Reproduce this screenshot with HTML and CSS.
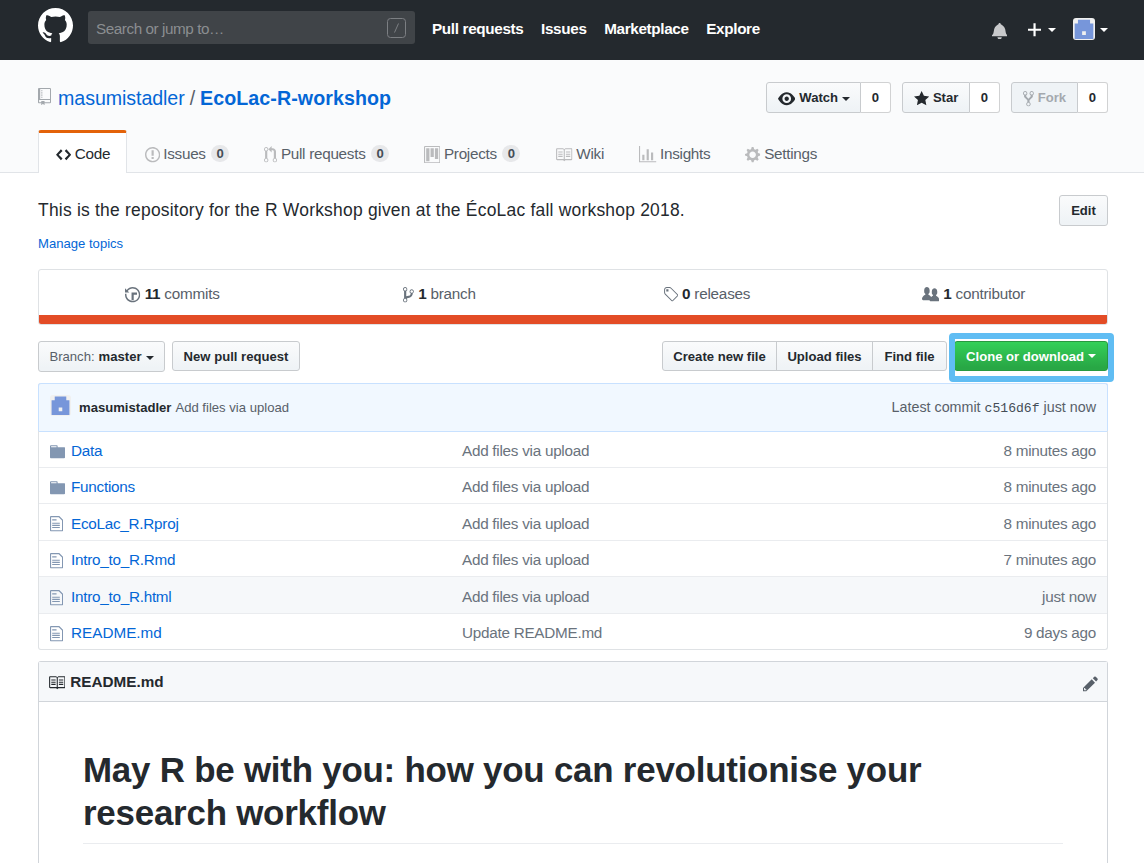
FILE: index.html
```html
<!DOCTYPE html>
<html lang="en">
<head>
<meta charset="utf-8">
<title>masumistadler/EcoLac-R-workshop</title>
<link rel="stylesheet" href="styles.css">
</head>
<body>
<svg class="sprite" aria-hidden="true">
  <symbol id="mark" viewBox="0 0 16 16"><path fill-rule="evenodd" d="M8 0C3.58 0 0 3.58 0 8c0 3.54 2.29 6.53 5.47 7.59.4.07.55-.17.55-.38 0-.19-.01-.82-.01-1.49-2.01.37-2.53-.49-2.69-.94-.09-.23-.48-.94-.82-1.13-.28-.15-.68-.52-.01-.53.63-.01 1.08.58 1.23.82.72 1.21 1.87.87 2.33.66.07-.52.28-.87.51-1.07-1.78-.2-3.64-.89-3.64-3.95 0-.87.31-1.59.82-2.15-.08-.2-.36-1.02.08-2.12 0 0 .67-.21 2.2.82.64-.18 1.32-.27 2-.27.68 0 1.36.09 2 .27 1.53-1.04 2.2-.82 2.2-.82.44 1.1.16 1.92.08 2.12.51.56.82 1.27.82 2.15 0 3.07-1.87 3.75-3.65 3.95.29.25.54.73.54 1.48 0 1.07-.01 1.93-.01 2.2 0 .21.15.46.55.38A8.013 8.013 0 0 0 16 8c0-4.42-3.58-8-8-8z"/></symbol>
  <symbol id="repo" viewBox="0 0 12 16"><path fill-rule="evenodd" d="M4 9H3V8h1v1zm0-3H3v1h1V6zm0-2H3v1h1V4zm0-2H3v1h1V2zm8-1v12c0 .55-.45 1-1 1H6v2l-1.5-1.5L3 16v-2H1c-.55 0-1-.45-1-1V1c0-.55.45-1 1-1h10c.55 0 1 .45 1 1zm-1 10H1v2h2v-1h3v1h5v-2zm0-10H2v9h9V1z"/></symbol>
  <symbol id="code" viewBox="0 0 14 16"><path fill-rule="evenodd" d="M9.500 3L8 4.500 11.500 8 8 11.500 9.500 13 14 8 9.500 3zm-5 0L0 8l4.500 5L6 11.500 2.500 8 6 4.500 4.500 3z"/></symbol>
  <symbol id="issue" viewBox="0 0 14 16"><path fill-rule="evenodd" d="M7 2.300c3.140 0 5.700 2.560 5.700 5.700s-2.560 5.700-5.700 5.700A5.710 5.710 0 0 1 1.300 8c0-3.140 2.560-5.700 5.700-5.700zM7 1C3.140 1 0 4.140 0 8s3.140 7 7 7 7-3.140 7-7-3.140-7-7-7zm1 3H6v5h2V4zm0 6H6v2h2v-2z"/></symbol>
  <symbol id="pr" viewBox="0 0 12 16"><path fill-rule="evenodd" d="M11 11.280V5c-.030-.780-.340-1.470-.940-2.060C9.460 2.350 8.780 2.030 8 2H7V0L4 3l3 3V4h1c.270.020.480.110.690.310.210.200.300.420.310.690v6.280A1.993 1.993 0 0 0 10 15a1.993 1.993 0 0 0 1-3.720zm-1 2.920c-.660 0-1.200-.550-1.200-1.200 0-.650.550-1.200 1.200-1.200.650 0 1.200.550 1.200 1.200 0 .650-.550 1.200-1.200 1.200zM4 3c0-1.110-.890-2-2-2a1.993 1.993 0 0 0-1 3.720v6.560A1.993 1.993 0 0 0 2 15a1.993 1.993 0 0 0 1-3.720V4.720c.590-.340 1-.980 1-1.720zm-.800 10c0 .660-.550 1.200-1.200 1.200-.650 0-1.200-.550-1.200-1.200 0-.650.550-1.200 1.200-1.200.650 0 1.200.550 1.200 1.200zM2 4.200C1.340 4.200.800 3.650.800 3c0-.650.550-1.200 1.200-1.200.650 0 1.200.550 1.200 1.200 0 .650-.550 1.200-1.200 1.200z"/></symbol>
  <symbol id="project" viewBox="0 0 15 16"><path fill-rule="evenodd" d="M10 12h3V2h-3v10zm-4-2h3V2H6v8zm-4 4h3V2H2v12zm-1 1h13V1H1v14zM14 0H1a1 1 0 0 0-1 1v14a1 1 0 0 0 1 1h13a1 1 0 0 0 1-1V1a1 1 0 0 0-1-1z"/></symbol>
  <symbol id="book" viewBox="0 0 16 16"><path fill-rule="evenodd" d="M3 5h4v1H3V5zm0 3h4V7H3v1zm0 2h4V9H3v1zm11-5h-4v1h4V5zm0 2h-4v1h4V7zm0 2h-4v1h4V9zm2-6v9c0 .55-.45 1-1 1H9.500l-1 1-1-1H2c-.55 0-1-.45-1-1V3c0-.55.45-1 1-1h5.500l1 1 1-1H15c.55 0 1 .45 1 1zm-8 .5L7.500 3H2v9h6V3.500zm7-.5H9.500l-.5.5V12h6V3z"/></symbol>
  <symbol id="graph" viewBox="0 0 16 16"><path fill-rule="evenodd" d="M16 14v1H0V0h1v14h15zM5 13H3V8h2v5zm4 0H7V3h2v10zm4 0h-2V6h2v7z"/></symbol>
  <symbol id="gear" viewBox="0 0 14 16"><path fill-rule="evenodd" d="M14 8.770v-1.600l-1.940-.640-.450-1.090.880-1.840-1.130-1.130-1.810.910-1.090-.450-.690-1.920h-1.600l-.630 1.940-1.110.450-1.840-.880-1.130 1.130.910 1.810-.450 1.090L0 7.230v1.590l1.940.640.450 1.090-.880 1.840 1.130 1.130 1.810-.910 1.090.450.690 1.920h1.590l.630-1.940 1.110-.450 1.840.880 1.130-1.130-.920-1.810.470-1.090L14 8.750v.020zM7 11c-1.660 0-3-1.340-3-3s1.340-3 3-3 3 1.340 3 3-1.340 3-3 3z"/></symbol>
  <symbol id="eye" viewBox="0 0 16 16"><path fill-rule="evenodd" d="M8.060 2C3 2 0 8 0 8s3 6 8.060 6C13 14 16 8 16 8s-3-6-7.940-6zM8 12c-2.200 0-4-1.780-4-4 0-2.200 1.800-4 4-4 2.220 0 4 1.800 4 4 0 2.220-1.780 4-4 4zm2-4c0 1.110-.890 2-2 2-1.110 0-2-.890-2-2 0-1.110.890-2 2-2 1.110 0 2 .890 2 2z"/></symbol>
  <symbol id="star" viewBox="0 0 14 16"><path fill-rule="evenodd" d="M14 6l-4.900-.640L7 1 4.900 5.360 0 6l3.600 3.260L2.670 14 7 11.670 11.330 14l-.930-4.740z"/></symbol>
  <symbol id="fork" viewBox="0 0 10 16"><path fill-rule="evenodd" d="M8 1a1.993 1.993 0 0 0-1 3.720V6L5 8 3 6V4.720A1.993 1.993 0 0 0 2 1a1.993 1.993 0 0 0-1 3.720V6.500l3 3v1.780A1.993 1.993 0 0 0 5 15a1.993 1.993 0 0 0 1-3.720V9.500l3-3V4.720A1.993 1.993 0 0 0 8 1zM2 4.200C1.340 4.200.800 3.650.800 3c0-.650.550-1.200 1.200-1.200.650 0 1.200.550 1.200 1.200 0 .650-.550 1.200-1.200 1.200zm3 10c-.660 0-1.200-.550-1.200-1.200 0-.650.550-1.200 1.200-1.200.650 0 1.200.550 1.200 1.200 0 .650-.550 1.200-1.200 1.200zm3-10c-.660 0-1.200-.550-1.200-1.200 0-.650.550-1.200 1.200-1.200.650 0 1.200.550 1.200 1.200 0 .650-.550 1.200-1.200 1.200z"/></symbol>
  <symbol id="history" viewBox="0 0 14 16"><path fill-rule="evenodd" d="M8 13H6V6h5v2H8v5zM7 1C4.810 1 2.870 2.020 1.590 3.590L0 2v4h4L2.500 4.500C3.550 3.170 5.170 2.300 7 2.300c3.140 0 5.700 2.560 5.700 5.700s-2.560 5.700-5.700 5.700A5.710 5.710 0 0 1 1.300 8c0-.340.030-.670.090-1H.080C.030 7.330 0 7.660 0 8c0 3.860 3.140 7 7 7s7-3.140 7-7-3.140-7-7-7z"/></symbol>
  <symbol id="branch" viewBox="0 0 10 16"><path fill-rule="evenodd" d="M10 5c0-1.110-.890-2-2-2a1.993 1.993 0 0 0-1 3.720v.300c-.020.520-.230.980-.630 1.380-.400.400-.860.610-1.380.630-.830.020-1.480.160-2 .450V4.720a1.993 1.993 0 0 0-1-3.720C.880 1 0 1.890 0 3a2 2 0 0 0 1 1.720v6.560c-.590.350-1 .990-1 1.720 0 1.110.890 2 2 2 1.110 0 2-.890 2-2 0-.530-.200-1-.530-1.360.090-.060.480-.410.590-.470.250-.110.560-.170.940-.170 1.050-.050 1.950-.450 2.750-1.250S8.950 7.770 9 6.730h-.020C9.590 6.370 10 5.730 10 5zM2 1.800c.660 0 1.200.550 1.200 1.200 0 .650-.550 1.200-1.200 1.200C1.350 4.200.800 3.650.800 3c0-.650.550-1.200 1.200-1.200zm0 12.410c-.660 0-1.200-.550-1.200-1.200 0-.650.550-1.200 1.200-1.200.650 0 1.200.550 1.200 1.200 0 .650-.550 1.200-1.200 1.200zm6-8c-.660 0-1.200-.550-1.200-1.200 0-.650.550-1.200 1.200-1.200.650 0 1.200.550 1.200 1.200 0 .650-.550 1.200-1.200 1.200z"/></symbol>
  <symbol id="tag" viewBox="0 0 14 16"><path fill-rule="evenodd" d="M7.730 1.730C7.260 1.260 6.620 1 5.960 1H3.500C2.130 1 1 2.130 1 3.500v2.470c0 .660.270 1.300.730 1.770l6.060 6.060c.390.390 1.020.390 1.410 0l4.590-4.590a.996.996 0 0 0 0-1.410L7.730 1.730zM2.380 7.090c-.310-.300-.470-.700-.470-1.130V3.500c0-.880.720-1.590 1.590-1.590h2.470c.420 0 .830.160 1.130.470l6.140 6.130-4.730 4.730-6.130-6.150zM3.010 3h2v2H3V3h.010z"/></symbol>
  <symbol id="people" viewBox="0 0 16 16"><path fill-rule="evenodd" d="M16 12.999c0 .439-.450 1-1 1H7.995c-.539 0-.994-.447-.995-.999H1c-.540 0-1-.561-1-1 0-2.634 3-4 3-4s.229-.409 0-1c-.841-.621-1.058-.590-1-3 .058-2.419 1.367-3 2.500-3s2.442.580 2.500 3c.058 2.410-.159 2.379-1 3-.229.590 0 1 0 1s1.549.711 2.420 2.088C9.196 9.369 10 8.999 10 8.999s.229-.409 0-1c-.841-.620-1.058-.590-1-3 .058-2.419 1.367-3 2.500-3s2.437.581 2.495 3c.059 2.410-.158 2.380-1 3-.229.590 0 1 0 1s3.005 1.366 3.005 4z"/></symbol>
  <symbol id="folder" viewBox="0 0 14 16"><path fill-rule="evenodd" d="M13 4H7V3c0-.660-.310-1-1-1H1c-.550 0-1 .450-1 1v10c0 .550.450 1 1 1h12c.550 0 1-.450 1-1V5c0-.550-.450-1-1-1zM6 4H1V3h5v1z"/></symbol>
  <symbol id="file" viewBox="0 0 12 16"><path fill-rule="evenodd" d="M6 5H2V4h4v1zM2 8h7V7H2v1zm0 2h7V9H2v1zm0 2h7v-1H2v1zm10-7.500V14c0 .550-.450 1-1 1H1c-.550 0-1-.450-1-1V2c0-.550.450-1 1-1h7.500L12 4.500zM11 5L8 2H1v12h10V5z"/></symbol>
  <symbol id="pencil" viewBox="0 0 14 16"><path fill-rule="evenodd" d="M0 12v3h3l8-8-3-3-8 8zm3 2H1v-2h1v1h1v1zm10.300-9.300L12 6 9 3l1.300-1.300a.996.996 0 0 1 1.410 0l1.590 1.590c.390.390.390 1.020 0 1.410z"/></symbol>
  <symbol id="bell" viewBox="0 0 14 16"><path fill-rule="evenodd" d="M13.990 11.991v1H0v-1l.730-.580c.769-.769.809-2.547 1.189-4.416.770-3.767 4.077-4.996 4.077-4.996 0-.550.450-1 .999-1 .550 0 1 .450 1 1 0 0 3.387 1.229 4.156 4.996.380 1.879.420 3.657 1.190 4.417l.659.580h-.010zM6.995 15.990c1.110 0 1.999-.890 1.999-1.999H4.996c0 1.110.890 1.999 1.999 1.999z"/></symbol>
  <symbol id="plus" viewBox="0 0 12 16"><path fill-rule="evenodd" d="M12 9H7v5H5V9H0V7h5V2h2v5h5v2z"/></symbol>
  <symbol id="identicon" viewBox="0 0 20 20"><path fill="#f0f0f0" d="M0 0h20v20H0z"/><path fill="#7796da" fill-rule="evenodd" d="M4.500 1.500h11v3.400h3V19h-17V4.900h3zM8.300 12v3.500h3.400V12z"/></symbol>
</svg>

<header class="topbar">
  <svg class="logo"><use href="#mark"/></svg>
  <div class="search"><span>Search or jump to…</span><svg class="slash" viewBox="0 0 19 20"><rect x=".5" y=".5" width="18" height="19" rx="3"/><path d="M11.500 5.500l-4 9"/></svg></div>
  <nav class="topnav"><a>Pull requests</a><a>Issues</a><a>Marketplace</a><a>Explore</a></nav>
  <div class="user">
    <svg class="icon w14 bell"><use href="#bell"/></svg>
    <span class="menu add"><svg class="icon w12"><use href="#plus"/></svg><i class="caret"></i></span>
    <span class="menu"><svg class="avatar-top"><use href="#identicon"/></svg><i class="caret"></i></span>
  </div>
</header>

<section class="repohead">
  <div class="titlebar">
    <h1 class="title"><svg class="icon w12 muted"><use href="#repo"/></svg><a>masumistadler</a><span class="sep">/</span><a class="name">EcoLac-R-workshop</a></h1>
    <div class="social">
      <div class="group watch"><span class="btn"><svg class="icon w16"><use href="#eye"/></svg>Watch<i class="caret"></i></span><span class="count">0</span></div>
      <div class="group star"><span class="btn"><svg class="icon w14"><use href="#star"/></svg>Star</span><span class="count">0</span></div>
      <div class="group fork"><span class="btn disabled"><svg class="icon w10"><use href="#fork"/></svg>Fork</span><span class="count">0</span></div>
    </div>
  </div>
  <nav class="tabs">
    <a class="tab active"><svg class="icon w14"><use href="#code"/></svg>Code</a>
    <a class="tab"><svg class="icon w14"><use href="#issue"/></svg>Issues<b class="counter">0</b></a>
    <a class="tab"><svg class="icon w12"><use href="#pr"/></svg>Pull requests<b class="counter">0</b></a>
    <a class="tab"><svg class="icon w15"><use href="#project"/></svg>Projects<b class="counter">0</b></a>
    <a class="tab"><svg class="icon w16"><use href="#book"/></svg>Wiki</a>
    <a class="tab"><svg class="icon w16"><use href="#graph"/></svg>Insights</a>
    <a class="tab"><svg class="icon w14"><use href="#gear"/></svg>Settings</a>
  </nav>
</section>

<main class="content">
  <div class="about"><p>This is the repository for the R Workshop given at the ÉcoLac fall workshop 2018.</p><span class="btn edit">Edit</span></div>
  <a class="topics">Manage topics</a>

  <div class="summary">
    <div class="stats">
      <span><svg class="icon w14"><use href="#history"/></svg><b>11</b> commits</span>
      <span><svg class="icon w10"><use href="#branch"/></svg><b>1</b> branch</span>
      <span><svg class="icon w14"><use href="#tag"/></svg><b>0</b> releases</span>
      <span><svg class="icon w16"><use href="#people"/></svg><b>1</b> contributor</span>
    </div>
    <div class="langbar"></div>
  </div>

  <div class="filenav">
    <span class="btn branchsel"><span class="label">Branch:</span>master<i class="caret"></i></span>
    <span class="btn newpr">New pull request</span>
    <div class="joined"><span class="btn create">Create new file</span><span class="btn upload">Upload files</span><span class="btn find">Find file</span></div>
    <span class="btn clone">Clone or download<i class="caret"></i><span class="ring"></span></span>
  </div>

  <div class="files">
    <div class="tease"><svg class="avatar"><use href="#identicon"/></svg><b>masumistadler</b><span>Add files via upload</span><span class="latest">Latest commit <code>c516d6f</code> just now</span></div>
    <div class="row first"><svg class="icon w14"><use href="#folder"/></svg><a>Data</a><span>Add files via upload</span><time>8 minutes ago</time></div>
    <div class="row"><svg class="icon w14"><use href="#folder"/></svg><a>Functions</a><span>Add files via upload</span><time>8 minutes ago</time></div>
    <div class="row"><svg class="icon w12"><use href="#file"/></svg><a>EcoLac_R.Rproj</a><span>Add files via upload</span><time>8 minutes ago</time></div>
    <div class="row"><svg class="icon w12"><use href="#file"/></svg><a>Intro_to_R.Rmd</a><span>Add files via upload</span><time>7 minutes ago</time></div>
    <div class="row hover"><svg class="icon w12"><use href="#file"/></svg><a>Intro_to_R.html</a><span>Add files via upload</span><time>just now</time></div>
    <div class="row"><svg class="icon w12"><use href="#file"/></svg><a class="caps">README.md</a><span>Update README.md</span><time>9 days ago</time></div>
  </div>

  <article class="readme">
    <h3><svg class="icon w16"><use href="#book"/></svg>README.md<svg class="icon w14 pencil"><use href="#pencil"/></svg></h3>
    <div class="body"><h1>May R be with you: how you can revolutionise your research workflow</h1></div>
  </article>
</main>
</body>
</html>
```
FILE: styles.css
```css
* { box-sizing: border-box; }

body {
  margin: 0;
  height: 863px;
  overflow: hidden;
  background: #fff;
  color: #24292e;
  font: 15.27px/23px "Liberation Sans", Arial, sans-serif;
}

a { color: #0366d6; }
.sprite { display: none; }

.icon { height: 17.45px; flex: none; fill: currentColor; }
.w10 { width: 10.9px; }
.w12 { width: 13.1px; }
.w14 { width: 15.27px; }
.w15 { width: 16.36px; }
.w16 { width: 17.45px; }

.caret {
  flex: none;
  width: 0;
  height: 0;
  border: 4.36px solid transparent;
  border-top-color: currentColor;
  border-bottom: 0;
}

/* Global header */
.topbar {
  display: flex;
  height: 60px;
  padding: 0 36px 0 38px;
  background: #24292e;
  color: #fff;
}
.logo { width: 35px; height: 35px; margin-top: 8px; fill: #fff; }
.search {
  display: flex;
  align-items: center;
  justify-content: space-between;
  width: 327px;
  height: 33px;
  margin: 11px 0 0 15px;
  padding: 2px 9px 0 8px;
  border-radius: 3px;
  background: #404448;
  color: #8b8e91;
  letter-spacing: -.44px;
}
.slash { width: 19px; height: 20px; margin-top: -1px; fill: none; stroke: #7c7f83; }
.topnav { display: flex; gap: 17.6px; margin: 17px 0 0 17px; letter-spacing: -.34px; }
.topnav a { color: #fff; font-weight: bold; }
.user { display: flex; align-items: center; height: 58px; margin-left: auto; }
.bell { margin-top: 3px; color: #c8c9cb; }
.menu { display: flex; align-items: center; gap: 7px; }
.add { margin: 0 17px 0 21px; }
.add .icon { margin-top: 1px; }
.avatar-top { width: 22px; height: 22px; margin-right: -2px; border-radius: 3px; }
.user .caret { margin-top: 1px; }

/* Repository header */
.repohead {
  height: 113px;
  padding: 22px 36px 0 38px;
  border-bottom: 1px solid #e1e4e8;
  background: #fafbfc;
}
.titlebar { display: flex; justify-content: space-between; height: 48px; }
.title {
  display: flex;
  height: 31px;
  margin: 0;
  font-size: 19.64px;
  font-weight: normal;
  line-height: 33px;
  letter-spacing: -.08px;
}
.title .icon { margin: 6px 7px 0 0; color: #a3a8ad; }
.title .sep { margin: 0 5px; color: #586069; }
.title .name { font-weight: bold; letter-spacing: .08px; }

.btn {
  display: flex;
  align-items: center;
  justify-content: center;
  height: 31px;
  border: 1px solid #c8cbce;
  border-radius: 3px;
  background: linear-gradient(#fafbfc, #eff3f6 90%);
  font-size: 13.1px;
  font-weight: bold;
  white-space: nowrap;
}
.social { display: flex; gap: 11px; }
.group { display: flex; }
.group .btn { border-radius: 3px 0 0 3px; gap: 4px; }
.group .icon { position: relative; top: 1px; }
.watch .btn { width: 95px; padding-left: 1px; }
.group .caret { margin-top: 2px; }
.star .btn { width: 68px; }
.fork .btn { width: 67px; }
.btn.disabled { background: #eff3f6; color: #a4a9ae; }
.count {
  width: 30px;
  height: 31px;
  border: 1px solid #d1d2d3;
  border-left: 0;
  border-radius: 0 3px 3px 0;
  background: #fff;
  font-size: 13.1px;
  font-weight: bold;
  line-height: 29px;
  text-align: center;
}

.tabs { display: flex; }
.tab {
  display: flex;
  align-items: center;
  height: 42px;
  padding: 5px 17.5px 0;
  color: #586069;
  letter-spacing: -.28px;
}
.tab .icon { margin: 2px 3.5px 0 0; color: #babbbd; }
.tab.active {
  width: 89px;
  height: 43px;
  padding: 1px 16px 0 17px;
  border: 1px solid #e1e4e8;
  border-top: 3px solid #e36209;
  border-bottom: 0;
  border-radius: 3px 3px 0 0;
  background: #fff;
  color: #24292e;
}
.tab.active .icon { margin-top: 3px; color: #24292e; }
.counter {
  min-width: 18px;
  height: 17px;
  margin-left: 5.5px;
  padding: 0 5.400px;
  border-radius: 20px;
  background: #e7e8ea;
  color: #444d56;
  font-size: 13.1px;
  line-height: 17px;
  letter-spacing: 0;
  text-align: center;
}

/* Page content */
.content { padding: 22px 36px 0 38px; }
.about { display: flex; justify-content: space-between; }
.about p { margin: 0; font-size: 17.45px; line-height: 31px; letter-spacing: .225px; }
.edit { width: 49px; }
.topics { display: block; margin-top: 8px; font-size: 13.1px; line-height: 20px; }

.summary {
  height: 56px;
  margin-top: 15px;
  border: 1px solid #dfe2e5;
  border-radius: 3px;
  overflow: hidden;
}
.stats { display: grid; grid-template-columns: repeat(4, 1fr); height: 45px; }
.stats span {
  display: flex;
  align-items: center;
  justify-content: center;
  gap: 4px;
  padding-top: 2px;
  color: #586069;
  letter-spacing: -.22px;
}
.stats b { color: #24292e; }
.stats .icon { margin-top: 3px; color: #6a737d; }
.langbar { height: 9px; background: #e34c26; }

.filenav { display: flex; align-items: flex-start; height: 42px; margin-top: 16px; }
.filenav .btn { height: 30px; }
.filenav .branchsel { width: 127px; height: 31px; gap: 4px; }
.branchsel .caret { margin-top: 2px; }
.branchsel .label { color: #586069; font-weight: normal; }
.newpr { width: 128px; margin-left: 7px; }
.joined { display: flex; margin-left: auto; }
.joined .btn { border-radius: 0; }
.joined .create { width: 115px; border-radius: 3px 0 0 3px; }
.joined .upload { width: 97px; margin-left: -1px; }
.joined .find { width: 75px; margin-left: -1px; border-radius: 0 3px 3px 0; }
.btn.clone {
  position: relative;
  width: 154px;
  margin-left: 7px;
  gap: 4px;
  border-color: #28993f;
  background: linear-gradient(#34d058, #28a745 90%);
  color: #fff;
}
.ring {
  position: absolute;
  inset: -9px -7px -12px -6px;
  border: 6px solid #60bdf3;
  border-radius: 4px;
}

.files { border: 1px solid #dfe2e5; border-top: 0; border-radius: 3px; }
.tease {
  display: flex;
  align-items: center;
  gap: 4px;
  height: 48px;
  margin: 0 -1px;
  padding: 0 11px 0 12px;
  border: 1px solid #c8e1ff;
  border-bottom: 0;
  border-radius: 3px 3px 0 0;
  background: #f1f8ff;
  color: #586069;
  font-size: 13.1px;
}
.tease b { color: #24292e; }
.avatar { width: 21px; height: 21px; margin: -5px 4px 0 -1px; border-radius: 3px; }
.latest { margin-left: auto; font-size: 14.3px; }
.latest code { color: #444d56; font: 13.1px "Liberation Mono", monospace; }
.row {
  display: grid;
  grid-template-columns: 21px 391px 1fr auto;
  align-items: center;
  height: 36.4px;
  padding: 2px 11px 0;
  border-top: 1px solid #eaecef;
  letter-spacing: -.26px;
}
.row.first { height: 36px; border-top-color: #c8e1ff; }
.row.hover { padding-top: 3px; background: #f6f8fa; }
.row .icon { margin-top: 2px; color: #8397b2; }
.row .w12 { color: #8397b2; }
.row .caps { letter-spacing: 0; }
.row span, .row time { color: #6a737d; }

.readme {
  height: 202px;
  margin-top: 11px;
  border: 1px solid #d1d5da;
  border-bottom: 0;
  border-radius: 3px 3px 0 0;
}
.readme h3 {
  display: flex;
  align-items: center;
  height: 40px;
  margin: 0;
  padding: 0 9px;
  border-bottom: 1px solid #d1d5da;
  background: #f6f8fa;
  font-size: 15.27px;
}
.readme h3 .icon { margin: 2px 4.8px 0 0; }
.readme h3 .pencil { margin: 5px 0 0 auto; color: #586069; }
.body { padding: 46px 44px 0; }
.body h1 {
  margin: 0;
  padding-bottom: 9px;
  border-bottom: 1px solid #eaecef;
  font-size: 34.9px;
  line-height: 43px;
  letter-spacing: -.22px;
}
```
